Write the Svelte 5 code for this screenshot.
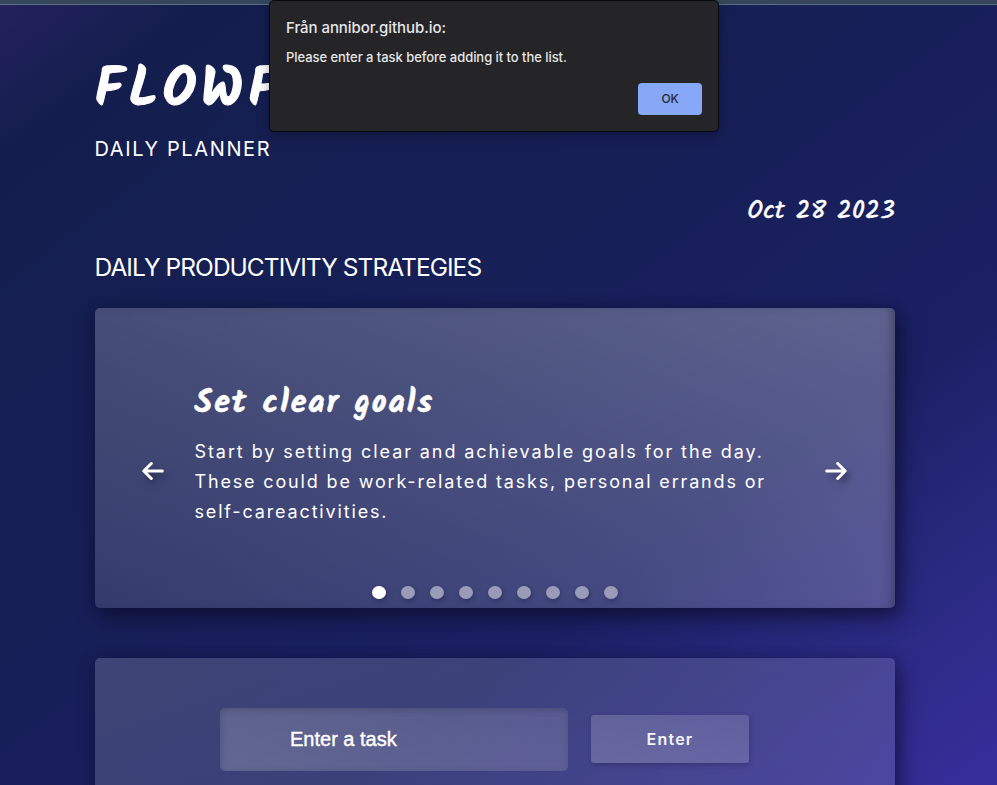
<script>
  const slides = Array.from({ length: 9 }, (_, i) => i);
  let active = $state(0);
  let task = $state('');
  const move = (step) => (active = (active + step + slides.length) % slides.length);
</script>

<div class="page">
  <div class="browser-edge"></div>
  <main>
    <h1>FLOWF</h1>
    <p class="tagline">DAILY PLANNER</p>
    <p class="date">Oct 28 2023</p>
    <h2>DAILY PRODUCTIVITY STRATEGIES</h2>

    <section class="carousel">
      <div class="slide">
        <button class="arrow" aria-label="Previous" onclick={() => move(-1)}>
          <svg width="24" height="22" viewBox="0 0 24 22"><path d="M21.3 11H3M10.3 3.5L2.8 11l7.5 7.5" /></svg>
        </button>
        <div class="copy">
          <h3>Set clear goals</h3>
          <p><span class="lead">Start by setting clear and achievable goals for the day.</span><br />These could be work-related tasks, personal errands or<br />self-careactivities.</p>
        </div>
        <button class="arrow" aria-label="Next" onclick={() => move(1)}>
          <svg width="24" height="22" viewBox="0 0 24 22"><path d="M2.7 11H21M13.7 3.5l7.5 7.5-7.5 7.5" /></svg>
        </button>
      </div>
      <div class="dots">
        {#each slides as i}
          <span class:active={i === active}></span>
        {/each}
      </div>
    </section>

    <section class="tasks">
      <input bind:value={task} placeholder="Enter a task" />
      <button class="enter">Enter</button>
    </section>
  </main>

  <div class="dialog" role="alertdialog">
    <div class="origin">Från annibor.github.io:</div>
    <div class="message">Please enter a task before adding it to the list.</div>
    <button class="ok">OK</button>
  </div>
</div>

<style>
  :global(body) { margin: 0; background: #171f56; }
  * { box-sizing: border-box; }
  h1, h2, h3, p { margin: 0; font-weight: 400; white-space: nowrap; }
  button { border: 0; padding: 0; }
  .page {
    position: relative;
    height: 785px;
    overflow: hidden;
    color: #fff;
    font-family: Inter, "Liberation Sans", sans-serif;
    background: linear-gradient(143deg, #25215d 0%, #131e4e 10%, #151f52 25%, #171f58 46%, #1a2063 68%, #2d2b86 87%, #372e9c 100%);
  }
  .browser-edge { height: 5px; background: #36465c; border-bottom: 1px solid #5b7080; }
  main { width: 800px; margin-left: 95px; display: flex; flex-direction: column; }
  h1, h3, .date { font-family: Kalam, "Open Sans", sans-serif; }
  h1 { margin-top: 52px; margin-left: -0.5px; height: 70px; line-height: 70px; font-size: 54.5px; font-weight: 700; letter-spacing: 4.4px; -webkit-text-stroke: 1px #fff; }
  .tagline { margin-top: 7px; height: 30px; line-height: 30px; font-size: 20px; letter-spacing: 1.62px; margin-left: -0.5px; }
  .date { align-self: flex-end; margin-top: 33px; height: 30px; line-height: 30px; font-size: 25.5px; letter-spacing: 0.3px; -webkit-text-stroke: 0.5px #fff; }
  h2 { margin-top: 25px; height: 30px; line-height: 30px; font-size: 24.5px; letter-spacing: -0.96px; margin-left: -0.5px; }
  .carousel {
    margin-top: 26px;
    height: 300px;
    display: flex;
    flex-direction: column;
    border-radius: 5px;
    background: linear-gradient(20deg, rgba(255,255,255,.13), rgba(255,255,255,.2) 45%, rgba(255,255,255,.3));
    box-shadow: 5px 10px 20px rgba(10,10,35,.6), 0 0 12px rgba(10,10,35,.25), inset -8px 0 12px -6px rgba(40,40,60,.55);
  }
  .slide { height: 277px; padding: 0 47px 0 46px; display: flex; justify-content: space-between; }
  .copy { width: 613px; padding: 76px 0 0 6.5px; }
  h3 { height: 40px; line-height: 40px; font-size: 32px; font-weight: 700; letter-spacing: 2px; -webkit-text-stroke: 0.6px #fff; }
  .copy p { margin-top: 13px; font-size: 18px; line-height: 30px; letter-spacing: 1.84px; }
  .copy .lead { letter-spacing: 1.92px; }
  .arrow { margin-top: 152px; height: 22px; background: none; }
  .arrow svg { display: block; filter: drop-shadow(3px 5px 3px rgba(20,20,45,.5)); fill: none; stroke: #fff; stroke-width: 3; stroke-linecap: round; stroke-linejoin: round; }
  .dots { display: flex; justify-content: center; gap: 15.5px; }
  .dots span { width: 13.5px; height: 13px; margin-top: 1px; border-radius: 50%; background: #999bb9; box-shadow: 1px 2px 4px rgba(20,20,50,.35); }
  .dots span.active { background: #fff; }
  .tasks {
    margin-top: 50px;
    height: 200px;
    padding: 50px 0 0 125px;
    display: flex;
    gap: 23px;
    border-radius: 5px;
    background: linear-gradient(160deg, rgba(255,255,255,.17), rgba(255,255,255,.11));
    box-shadow: 5px 10px 20px rgba(10,10,35,.55), 0 0 12px rgba(10,10,35,.25);
  }
  input {
    width: 348px;
    height: 63px;
    padding: 0 70px;
    border: 0;
    outline: 0;
    border-radius: 5px;
    color: #fff;
    font: 20px "Liberation Sans", Arial, sans-serif;
    -webkit-text-stroke: 0.4px #fff;
    background: linear-gradient(20deg, rgba(255,255,255,.2), rgba(255,255,255,.13));
    box-shadow: inset 1px 2px 6px rgba(55,55,90,.4);
  }
  input::placeholder { color: #fff; opacity: 1; }
  .enter {
    width: 158px;
    height: 48px;
    margin-top: 7px;
    border-radius: 3px;
    color: #f4f4fa;
    font: 600 16px Inter, sans-serif;
    letter-spacing: 1.2px;
    background: linear-gradient(20deg, rgba(255,255,255,.2), rgba(255,255,255,.14));
    box-shadow: 1px 2px 4px rgba(30,30,70,.35);
  }
  .dialog {
    position: absolute;
    left: 269px;
    top: 0;
    width: 450px;
    height: 132px;
    padding: 17px 16px 16px;
    display: flex;
    flex-direction: column;
    border: 1px solid #08090d;
    border-radius: 5px;
    background: #252527;
    box-shadow: 0 3px 12px rgba(0,0,20,.35);
    color: #e5e6e9;
  }
  .origin { height: 20px; line-height: 20px; font-size: 15px; font-weight: 500; letter-spacing: -0.06px; white-space: nowrap; }
  .message { margin-top: 9px; height: 20px; line-height: 20px; font-size: 13px; font-weight: 500; letter-spacing: -0.05px; white-space: nowrap; }
  .ok { align-self: flex-end; margin-top: 16px; width: 64px; height: 32px; flex: none; padding-bottom: 1px; border-radius: 4px; background: #87a8f7; color: #23283a; font: 500 12px Inter, sans-serif; letter-spacing: -0.1px; }
</style>
